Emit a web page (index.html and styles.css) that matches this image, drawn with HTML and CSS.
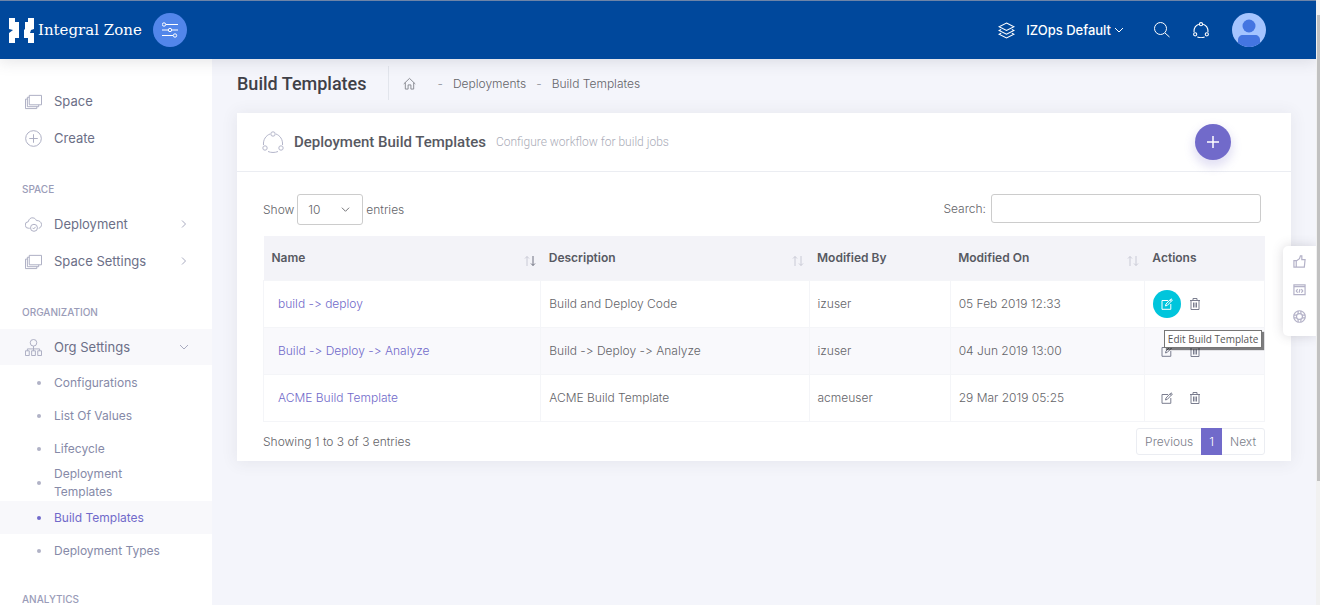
FILE: index.html
```html
<!DOCTYPE html>
<html lang="en">
<head>
    <meta charset="UTF-8">
    <meta name="viewport" content="width=device-width, initial-scale=1.0">
    <title>Build Templates</title>
    <link rel="stylesheet" href="styles.css">
</head>
<body>
    <!-- shared icons -->
    <svg class="sprite" aria-hidden="true">
        <symbol id="i-space" viewBox="0 0 18 16">
            <path d="M4.5 1.5h13v10h-13zM4.500 3.500H2.500v10h12v-2M2.500 5.500h-2v10h12v-2"/>
        </symbol>
        <symbol id="i-share" viewBox="0 0 22 22">
            <circle cx="11" cy="3" r="2.200"/><circle cx="3" cy="17" r="2.200"/><circle cx="19" cy="17" r="2.200"/>
            <path d="M8 3C4 4.500 1 8.500 1.500 14M14 3c4 1.500 7 5.500 6.500 11M6 20.500c3 1.300 7 1.300 10 0"/>
        </symbol>
        <symbol id="i-edit" viewBox="0 0 12 12">
            <path d="M7 2.500H1v8.800h8.800V6M4.500 8l.5-2L10 .8 11.400 2 6.400 7.300zM8.800 2l1.400 1.400"/>
        </symbol>
        <symbol id="i-trash" viewBox="0 0 12 12">
            <path d="M1 2.500h10M4 2.500v-2h4v2M2 2.500v9h8v-9M4.500 4.500v5M6 4.500v5M7.500 4.500v5"/>
        </symbol>
        <symbol id="i-right" viewBox="0 0 10 10"><path d="M3 1.500 6.500 5 3 8.500"/></symbol>
        <symbol id="i-down" viewBox="0 0 10 10"><path d="M1 3l4 4 4-4"/></symbol>
    </svg>

    <header class="topbar">
        <a class="brand" href="#">
            <svg class="brand-mark" viewBox="0 0 25 25">
                <path d="M0 0h6v4h4v16H6v5H0V15l4-3-4-1z"/>
                <path d="M25 0h-6v4h-3v7l-1 1v8h4v5h6V15h-4l1-3 3-1z"/>
            </svg>
            <span class="brand-name">Integral Zone</span>
        </a>
        <button class="toggle" type="button" aria-label="Toggle menu">
            <svg viewBox="0 0 16 16"><path d="M4 2.500h12M0 8h6M10 8h6M0 13.500h11"/><circle cx="2" cy="2.500" r="1.700"/><circle cx="8" cy="8" r="1.700"/><circle cx="13" cy="13.500" r="1.700"/></svg>
        </button>
        <nav class="topnav">
            <button class="org" type="button">
                <svg class="layers" viewBox="0 0 16 16"><path d="M8 1l7 3.500L8 8 1 4.500zM3 7L1 8l7 3.500L15 8l-2-1M3 10.500l-2 1L8 15l7-3.500-2-1"/></svg>
                <span>IZOps Default</span>
                <svg class="caret"><use href="#i-down"/></svg>
            </button>
            <button class="top-icon" type="button" aria-label="Search">
                <svg viewBox="0 0 16 16"><circle cx="6.500" cy="6.500" r="6"/><path d="M11 11l4.500 4"/></svg>
            </button>
            <button class="top-icon" type="button" aria-label="Workflows"><svg class="thick"><use href="#i-share"/></svg></button>
            <a class="avatar" href="#" aria-label="Profile">
                <svg viewBox="0 0 34 34"><circle cx="17" cy="17" r="17" fill="#a4c4ff"/><circle cx="17" cy="13" r="6.500" fill="#4475e1"/><path d="M6 30v-3c0-3 2-5 5-5h12c3 0 5 2 5 5v3a17 17 0 0 1-22 0z" fill="#4475e1"/></svg>
            </a>
        </nav>
    </header>

    <div class="layout">
        <aside class="sidebar">
            <a class="item" href="#"><svg><use href="#i-space"/></svg><span>Space</span></a>
            <a class="item" href="#"><svg viewBox="0 0 18 18"><circle cx="9" cy="9" r="8.300"/><path d="M9 4.500v9M4.500 9h9"/></svg><span>Create</span></a>
            <h4 class="section">SPACE</h4>
            <a class="item" href="#">
                <svg viewBox="0 0 18 18"><path d="M5 13H4a3.500 3.500 0 0 1-.5-7C4 3 6.500 1.500 8.500 2c2 .2 3 1.500 3.500 2.800C15 4.500 17.500 6.500 17.500 9c0 2-1 3.500-3 4"/><circle cx="9.500" cy="12.500" r="3.700"/><path d="M8 12.500l1.200 1.200 2-2.200"/></svg>
                <span>Deployment</span><svg class="arrow"><use href="#i-right"/></svg>
            </a>
            <a class="item" href="#"><svg><use href="#i-space"/></svg><span>Space Settings</span><svg class="arrow"><use href="#i-right"/></svg></a>
            <h4 class="section">ORGANIZATION</h4>
            <a class="item open" href="#">
                <svg viewBox="0 0 18 18"><circle cx="9" cy="4" r="3.500"/><path d="M9 7.500v5M2.500 12.500v-2h13v2M.5 12.500h4v5h-4zM7 12.500h4v5H7zM13.500 12.500h4v5h-4z"/></svg>
                <span>Org Settings</span><svg class="arrow"><use href="#i-down"/></svg>
            </a>
            <ul class="submenu">
                <li><a href="#">Configurations</a></li>
                <li><a href="#">List Of Values</a></li>
                <li><a href="#">Lifecycle</a></li>
                <li><a href="#">Deployment<br>Templates</a></li>
                <li class="active"><a href="#">Build Templates</a></li>
                <li><a href="#">Deployment Types</a></li>
            </ul>
            <h4 class="section">ANALYTICS</h4>
        </aside>

        <main class="content">
            <div class="subheader">
                <h1>Build Templates</h1>
                <nav class="crumbs">
                    <a href="#" aria-label="Home"><svg viewBox="0 0 14 14"><path d="M.8 7.500L7 1.500l6.200 6M2.500 6v7h3V8.500h3V13h3V6"/></svg></a>
                    <span class="dash">-</span>
                    <a href="#">Deployments</a>
                    <span class="dash">-</span>
                    <a href="#">Build Templates</a>
                </nav>
            </div>

            <section class="card">
                <div class="card-head">
                    <svg class="card-icon"><use href="#i-share"/></svg>
                    <h2>Deployment Build Templates</h2>
                    <small>Configure workflow for build jobs</small>
                    <button class="add" type="button" aria-label="Add template"><svg viewBox="0 0 14 14"><path d="M7 1v12M1 7h12"/></svg></button>
                </div>

                <div class="filters">
                    <label class="length">Show
                        <span class="select-wrap">
                            <select><option>10</option><option>25</option><option>50</option></select>
                            <svg><use href="#i-down"/></svg>
                        </span>
                        entries</label>
                    <label class="search">Search: <input type="search"></label>
                </div>

                <table class="grid">
                    <colgroup><col class="c-name"><col class="c-desc"><col class="c-by"><col class="c-on"><col class="c-act"></colgroup>
                    <thead>
                        <tr>
                            <th><div class="th">Name<svg class="sort asc" viewBox="0 0 12 12"><path d="M3 11V1.500M1 3.500l2-2 2 2"/><path class="dn" d="M9 1v9.500M7 8.500l2 2 2-2"/></svg></div></th>
                            <th><div class="th">Description<svg class="sort" viewBox="0 0 12 12"><path d="M3 11V1.500M1 3.500l2-2 2 2"/><path class="dn" d="M9 1v9.500M7 8.500l2 2 2-2"/></svg></div></th>
                            <th>Modified By</th>
                            <th><div class="th">Modified On<svg class="sort" viewBox="0 0 12 12"><path d="M3 11V1.500M1 3.500l2-2 2 2"/><path class="dn" d="M9 1v9.500M7 8.500l2 2 2-2"/></svg></div></th>
                            <th>Actions</th>
                        </tr>
                    </thead>
                    <tbody>
                        <tr>
                            <td><a href="#">build -&gt; deploy</a></td>
                            <td>Build and Deploy Code</td>
                            <td>izuser</td>
                            <td>05 Feb 2019 12:33</td>
                            <td>
                                <div class="actions">
                                    <button class="act hover" type="button" aria-label="Edit"><svg><use href="#i-edit"/></svg></button>
                                    <button class="act" type="button" aria-label="Delete"><svg><use href="#i-trash"/></svg></button>
                                    <div class="tooltip" role="tooltip">Edit Build Template</div>
                                </div>
                            </td>
                        </tr>
                        <tr>
                            <td><a href="#">Build -&gt; Deploy -&gt; Analyze</a></td>
                            <td>Build -&gt; Deploy -&gt; Analyze</td>
                            <td>izuser</td>
                            <td>04 Jun 2019 13:00</td>
                            <td>
                                <div class="actions">
                                    <button class="act" type="button" aria-label="Edit"><svg><use href="#i-edit"/></svg></button>
                                    <button class="act" type="button" aria-label="Delete"><svg><use href="#i-trash"/></svg></button>
                                </div>
                            </td>
                        </tr>
                        <tr>
                            <td><a href="#">ACME Build Template</a></td>
                            <td>ACME Build Template</td>
                            <td>acmeuser</td>
                            <td>29 Mar 2019 05:25</td>
                            <td>
                                <div class="actions">
                                    <button class="act" type="button" aria-label="Edit"><svg><use href="#i-edit"/></svg></button>
                                    <button class="act" type="button" aria-label="Delete"><svg><use href="#i-trash"/></svg></button>
                                </div>
                            </td>
                        </tr>
                    </tbody>
                </table>

                <div class="card-foot">
                    <span>Showing 1 to 3 of 3 entries</span>
                    <div class="pager">
                        <button type="button">Previous</button>
                        <button type="button" class="current">1</button>
                        <button type="button">Next</button>
                    </div>
                </div>
            </section>
        </main>
    </div>

    <div class="dock">
        <button type="button" aria-label="Like"><svg viewBox="0 0 14 14"><path d="M1 6h2.500v7H1zM3.500 6.500L7 4l1-3h1.500v4H13l-.8 8H3.500"/></svg></button>
        <button type="button" aria-label="Code"><svg viewBox="0 0 14 14"><path d="M1 2h12v10.500H1zM1 4h12M5 6.500L3.500 8.500 5 10.500M9 6.500l1.500 2-1.500 2M7.500 6.500l-1 4"/></svg></button>
        <button type="button" aria-label="Support"><svg viewBox="0 0 14 14"><circle cx="7" cy="7" r="6.200"/><circle cx="7" cy="7" r="3.200"/><path d="M5.500.8v3.500M8.500.8v3.500M5.500 9.700v3.500M8.500 9.700v3.500M.8 5.500h3.500M.8 8.500h3.500M9.700 5.500h3.500M9.700 8.500h3.500"/></svg></button>
    </div>
    <div class="scrollbar"><div class="thumb"></div></div>
</body>
</html>
```
FILE: styles.css
```css
* {
    box-sizing: border-box;
}
body {
    margin: 0;
    height: 100vh;
    padding-right: 4px;
    overflow: hidden;
    display: flex;
    flex-direction: column;
    font-family: Inter, "Open Sans", sans-serif;
    font-size: 12px;
    font-weight: 300;
    font-feature-settings: "calt" 0;
    color: #646469;
    background-color: #f4f5fb;
}
h1, h2, h4, ul {
    margin: 0;
    padding: 0;
}
a {
    color: inherit;
    text-decoration: none;
}
button {
    padding: 0;
    border: none;
    background: none;
    font: inherit;
    color: inherit;
    cursor: pointer;
}
svg {
    flex: none;
    display: block;
    fill: none;
    stroke: currentColor;
}
.sprite {
    position: absolute;
    width: 0;
    height: 0;
}

/* top bar */
.topbar {
    flex: none;
    height: 59px;
    padding: 0 50px 0 9px;
    display: flex;
    align-items: center;
    position: relative;
    z-index: 2;
    color: #fff;
    background-color: #00489c;
    border-top: 1px solid #6d84a8;
    box-shadow: 0 1px 15px 1px rgba(69, 65, 78, 0.15);
}
.brand {
    display: flex;
    align-items: center;
    gap: 4px;
}
.brand-mark {
    width: 25px;
    height: 25px;
    fill: #fff;
    stroke: none;
}
.brand-name {
    font-family: "DejaVu Serif", serif;
    font-size: 15px;
    font-weight: 400;
}
.toggle {
    width: 34px;
    height: 34px;
    margin-left: 11px;
    border-radius: 50%;
    display: flex;
    align-items: center;
    justify-content: center;
    background-color: #5286ea;
}
.toggle svg {
    width: 16px;
    height: 16px;
}
.topnav {
    margin-left: auto;
    display: flex;
    align-items: center;
}
.org {
    display: flex;
    align-items: center;
    font-size: 13px;
    font-weight: 500;
    margin-right: 30px;
}
.layers {
    width: 17px;
    height: 17px;
    margin-right: 11px;
}
.caret {
    width: 10px;
    height: 10px;
    margin-left: 3px;
}
.top-icon {
    margin-right: 23px;
}
.top-icon svg {
    width: 16px;
    height: 16px;
}
.top-icon .thick {
    stroke-width: 1.5;
}
.avatar svg {
    width: 34px;
    height: 34px;
    stroke: none;
}

.layout {
    flex: 1;
    min-height: 0;
    display: flex;
}

/* sidebar */
.sidebar {
    flex: none;
    width: 212px;
    padding-top: 24px;
    background-color: #fff;
}
.item {
    height: 36px;
    margin-bottom: 1px;
    padding: 0 23px 0 25px;
    display: flex;
    align-items: center;
    gap: 12px;
    font-size: 13px;
    font-weight: 400;
    color: #6c6f87;
}
.item svg {
    width: 17px;
    height: 17px;
    color: #a9abc0;
}
.item .arrow {
    width: 10px;
    height: 10px;
    margin-left: auto;
}
.item.open {
    background-color: #f8f8fb;
}
.section {
    padding: 23px 22px 8px;
    font-size: 10px;
    line-height: 18px;
    font-weight: 500;
    color: #9a9cb8;
}
.submenu {
    list-style: none;
}
.submenu a {
    min-height: 33px;
    padding: 0 20px 0 37px;
    display: flex;
    align-items: center;
    gap: 13px;
    line-height: 18px;
    font-weight: 400;
    color: #868aa8;
}
.submenu a::before {
    content: "";
    flex: none;
    width: 4px;
    height: 4px;
    border-radius: 50%;
    background-color: #b0b2c6;
}
.submenu .active a {
    color: #716aca;
    background-color: #f8f8fb;
}
.submenu .active a::before {
    background-color: #716aca;
}

/* content */
.content {
    flex: 1;
    min-width: 0;
    padding: 7px 25px;
}
.subheader {
    height: 34px;
    margin-bottom: 13px;
    display: flex;
    align-items: center;
}
.subheader h1 {
    font-family: Roboto, sans-serif;
    font-size: 18px;
    font-weight: 500;
    color: #3f4047;
    padding-right: 21px;
}
.crumbs {
    align-self: stretch;
    padding-left: 14px;
    display: flex;
    align-items: center;
    gap: 10px;
    border-left: 1px solid #e2e5ec;
}
.crumbs svg {
    width: 13px;
    height: 13px;
    margin-right: 12px;
    color: #85878f;
}
.dash {
    color: #8a8c96;
}
.card {
    background-color: #fff;
    box-shadow: 0 1px 15px 1px rgba(69, 65, 78, 0.08);
    padding-bottom: 6px;
}
.card-head {
    height: 59px;
    padding: 0 60px 0 25px;
    display: flex;
    align-items: center;
    border-bottom: 1px solid #ebedf2;
}
.card-icon {
    width: 22px;
    height: 22px;
    margin-right: 10px;
    color: #b4b6ca;
}
.card-head h2 {
    font-family: Roboto, sans-serif;
    font-size: 15px;
    font-weight: 500;
    color: #575962;
}
.card-head small {
    margin-left: 10px;
    font-family: Roboto, sans-serif;
    font-size: 12px;
    color: #aaacb8;
}
.add {
    width: 36px;
    height: 36px;
    margin-left: auto;
    border-radius: 50%;
    display: flex;
    align-items: center;
    justify-content: center;
    color: #fff;
    background-color: #716aca;
    box-shadow: 0 5px 10px 2px rgba(113, 106, 202, 0.2);
}
.add svg {
    width: 14px;
    height: 14px;
    stroke-width: 1.5;
}
.filters {
    padding: 22px 30px 11px 26px;
    display: flex;
    align-items: flex-start;
    justify-content: space-between;
}
.length, .search {
    display: flex;
    align-items: center;
    gap: 3px;
}
.select-wrap {
    display: inline-grid;
    align-items: center;
}
.select-wrap select, .select-wrap svg {
    grid-area: 1 / 1;
}
.select-wrap svg {
    width: 9px;
    height: 9px;
    margin-right: 13px;
    justify-self: end;
    pointer-events: none;
}
.length select {
    width: 66px;
    height: 31px;
    padding: 0 10px;
    appearance: none;
    border: 1px solid #ccc;
    border-radius: 3px;
    background-color: #fff;
    font: inherit;
    color: inherit;
}
.search {
    gap: 5px;
}
.search input {
    width: 270px;
    height: 29px;
    padding: 0 8px;
    border: 1px solid #ccc;
    border-radius: 3px;
    font: inherit;
}

/* table */
.grid {
    width: calc(100% - 52px);
    margin: 0 26px;
    table-layout: fixed;
    border-collapse: collapse;
}
.c-name { width: 27.700%; }
.c-desc { width: 26.800%; }
.c-by { width: 14.100%; }
.c-on { width: 19.400%; }
.c-act { width: 12%; }
.grid th {
    height: 44px;
    padding: 0 8px;
    text-align: left;
    font-weight: 600;
    color: #575962;
    background-color: #f3f3f8;
}
.th {
    display: flex;
    align-items: center;
    justify-content: space-between;
}
.sort {
    width: 12px;
    height: 12px;
    margin-top: 7px;
    margin-right: -3px;
    color: #c9cad6;
}
.asc .dn {
    stroke: #6f7180;
}
.grid td {
    height: 47px;
    padding: 0 8px;
    border: 1px solid #f4f5f8;
}
.grid td a {
    margin-left: 6px;
    color: #716aca;
}
.grid tbody tr:nth-child(even) {
    background-color: #f9f9fc;
}
.actions {
    display: flex;
    position: relative;
}
.act {
    width: 28px;
    height: 28px;
    border-radius: 50%;
    display: flex;
    align-items: center;
    justify-content: center;
    color: #7b7e8f;
}
.act svg {
    width: 12px;
    height: 12px;
}
.act.hover {
    color: #fff;
    background-color: #00c5dc;
}
.tooltip {
    position: absolute;
    top: 40px;
    left: 11px;
    z-index: 1;
    padding: 0 3px;
    border: 1px solid #767676;
    background-color: #fff;
    box-shadow: 2px 2px 1px rgba(0, 0, 0, 0.5);
    font-family: "Open Sans", sans-serif;
    font-size: 10px;
    font-weight: 400;
    line-height: 16px;
    white-space: nowrap;
    color: #575757;
}
.card-foot {
    padding: 6px 26px 0;
    display: flex;
    align-items: center;
    justify-content: space-between;
}
.pager {
    display: flex;
    border: 1px solid #ebedf2;
    border-radius: 3px;
}
.pager button {
    height: 25px;
    padding: 0 8px;
    color: #7b7e8a;
}
.pager .current {
    height: 27px;
    margin: -1px 0;
    color: #fff;
    background-color: #716aca;
}

/* right dock */
.dock {
    position: fixed;
    top: 246px;
    right: 4px;
    z-index: 3;
    width: 33px;
    height: 90px;
    padding: 9px 0 13px;
    display: flex;
    flex-direction: column;
    align-items: center;
    justify-content: space-between;
    border-radius: 5px 0 0 5px;
    background-color: #fff;
    box-shadow: 0 0 12px rgba(69, 65, 78, 0.2);
    color: #b4b2c8;
}
.dock svg {
    width: 13px;
    height: 13px;
    stroke-width: 1.3;
}
.scrollbar {
    position: fixed;
    top: 0;
    right: 0;
    bottom: 0;
    z-index: 3;
    width: 4px;
    padding: 15px 0 0 1px;
    background-color: #f1f1f1;
}
.thumb {
    height: 79%;
    background-color: #c1c1c1;
}
```
